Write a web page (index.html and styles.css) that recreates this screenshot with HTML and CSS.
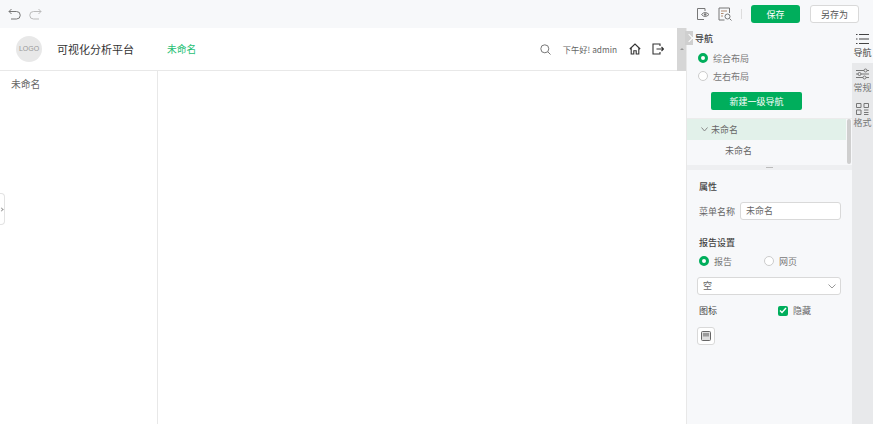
FILE: index.html
```html
<!DOCTYPE html>
<html lang="zh-CN">
<head>
<meta charset="utf-8">
<title>可视化分析平台</title>
<link rel="stylesheet" href="styles.css">
</head>
<body>
<div class="toolbar">
  <div class="tool-left">
    <svg class="ic" width="13" height="13" viewBox="0 0 13 13"><path d="M3.5 1 1 3.5 3.5 6M1 3.5h7.5a3.4 3.4 0 0 1 0 7.5H3" fill="none" stroke="#777" stroke-width="1"/></svg>
    <svg class="ic" width="13" height="13" viewBox="0 0 13 13"><path d="M9.5 1 12 3.500 9.500 6M12 3.500H4.500a3.400 3.400 0 0 0 0 7.500H10" fill="none" stroke="#bbb" stroke-width="1"/></svg>
  </div>
  <div class="tool-right">
    <svg class="ic" width="14" height="14" viewBox="0 0 14 14"><path d="M9 1.500H1.500v11H8M9 1.500v2.500" fill="none" stroke="#777"/><path d="M5.500 7.500Q9 3.500 13 7.500 9 11.500 5.500 7.500Z" fill="none" stroke="#777"/><circle cx="9.200" cy="7.500" r="1.300" fill="#777"/></svg>
    <svg class="ic ic-2" width="14" height="14" viewBox="0 0 14 14"><path d="M11.500 6V1H1v12h5.500" fill="none" stroke="#777"/><path d="M3 4h6M3 6.500h2.500M3 9h2" stroke="#b08a70"/><circle cx="9.500" cy="9.500" r="2.500" fill="none" stroke="#777"/><path d="m11.500 11.500 2 2" stroke="#777"/></svg>
    <span class="tool-sep"></span>
    <button class="btn-save">保存</button>
    <button class="btn-saveas">另存为</button>
  </div>
</div>
<div class="workspace">
  <main class="preview">
    <header class="app-header">
      <div class="logo">LOGO</div>
      <div class="app-title">可视化分析平台</div>
      <div class="app-tab">未命名</div>
      <div class="header-right">
        <svg class="search" width="11" height="11" viewBox="0 0 11 11"><circle cx="4.800" cy="4.800" r="4" fill="none" stroke="#777"/><path d="m7.800 7.800 2.700 2.700" stroke="#777"/></svg>
        <span class="greeting">下午好! admin</span>
        <svg class="home" width="12" height="12" viewBox="0 0 12 12"><path d="M.8 6 6 1l5.200 5M2.200 5v6h2.600V7.800h2.400V11h2.600V5" fill="none" stroke="#333" stroke-width="1.100"/></svg>
        <svg class="logout" width="12" height="12" viewBox="0 0 12 12"><path d="M8 3V1H1v10h7V9" fill="none" stroke="#333" stroke-width="1.100"/><path d="M4.500 6H11.500M9.500 4l2 2-2 2" fill="none" stroke="#333" stroke-width="1.100"/></svg>
      </div>
      <div class="scroll-col"><span class="scroll-arrow"></span></div>
    </header>
    <div class="preview-body">
      <aside class="side-menu">未命名</aside>
      <div class="canvas"></div>
    </div>
    <div class="side-handle"><span class="side-chevron"></span></div>
  </main>
  <section class="panel">
    <div class="panel-collapse"></div>
    <div class="panel-top">
      <h3 class="panel-title">导航</h3>
      <label class="radio-row"><span class="radio on"></span>综合布局</label>
      <label class="radio-row"><span class="radio"></span>左右布局</label>
      <button class="btn-new">新建一级导航</button>
    </div>
    <div class="tree">
      <div class="tree-row active">
        <svg width="7" height="5" viewBox="0 0 7 5"><path d="M.5.500 3.500 4 6.500.500" fill="none" stroke="#888"/></svg>未命名
      </div>
      <div class="tree-row child">未命名</div>
      <div class="tree-thumb"></div>
    </div>
    <div class="splitter"><span></span></div>
    <div class="props">
      <h4 class="sec-title">属性</h4>
      <div class="field">
        <span>菜单名称</span>
        <div class="input">未命名</div>
      </div>
      <h4 class="sec-title report">报告设置</h4>
      <div class="radio-pair">
        <label class="radio-row"><span class="radio on"></span>报告</label>
        <label class="radio-row"><span class="radio"></span>网页</label>
      </div>
      <div class="select">空
        <svg width="8" height="5" viewBox="0 0 8 5"><path d="M.5.500 4 4 7.500.500" fill="none" stroke="#999"/></svg>
      </div>
      <div class="icon-row">
        <span class="icon-label">图标</span>
        <label class="check"><span class="checkbox"><svg width="8" height="7" viewBox="0 0 8 7"><path d="M1 3.500 3 5.500 7 1" fill="none" stroke="#fff" stroke-width="1.400"/></svg></span>隐藏</label>
      </div>
      <div class="icon-btn"><svg width="10" height="10" viewBox="0 0 10 10"><rect x=".5" y=".5" width="9" height="9" rx="1" fill="#ddd" stroke="#666"/><rect x="2" y="2" width="6" height="3.500" fill="#999"/></svg></div>
    </div>
  </section>
  <nav class="tabs">
    <div class="tab on">
      <svg width="13" height="12" viewBox="0 0 13 12"><path d="M3 1.500h10M3 6h10M3 10.500h10M0 1.500h1.500M0 6h1.500M0 10.500h1.500" stroke="#444" fill="none"/></svg>
      <span>导航</span>
    </div>
    <div class="tab">
      <svg width="13" height="12" viewBox="0 0 13 12"><path d="M0 2.500h8M11 2.500h2M0 6h2M5 6h8M0 9.500h7M10 9.500h3" stroke="#777"/><circle cx="9.500" cy="2.500" r="1.500" fill="none" stroke="#777"/><circle cx="3.500" cy="6" r="1.500" fill="none" stroke="#777"/><circle cx="8.500" cy="9.500" r="1.500" fill="none" stroke="#777"/></svg>
      <span>常规</span>
    </div>
    <div class="tab">
      <svg width="13" height="12" viewBox="0 0 13 12"><path d="M.5.500h4.500v4h-4.500zM8 .5h4.500v4H8zM.5 7h4.500v4.500h-4.500zM8 7h4.500M8 9.500h4.500M8 11.500h4.500" fill="none" stroke="#777"/></svg>
      <span>格式</span>
    </div>
  </nav>
</div>
</body>
</html>
```
FILE: styles.css
```css
* { box-sizing: border-box; }
html, body { margin: 0; height: 100%; }
body {
  width: 873px;
  height: 424px;
  overflow: hidden;
  background: #fff;
  color: #555;
  font: 9px "Noto Sans CJK SC", "Liberation Sans", sans-serif;
  display: flex;
  flex-direction: column;
}
svg { display: block; flex: none; }
button { font-family: inherit; padding: 0; cursor: pointer; }
h3, h4 { margin: 0; font-weight: 500; }

.toolbar {
  height: 28px;
  flex: none;
  background: #f7f8fa;
  display: flex;
  align-items: center;
  justify-content: space-between;
  padding: 0 14px 0 8px;
}
.tool-left { display: flex; gap: 8px; }
.tool-right { display: flex; align-items: center; }
.ic-2 { margin-left: 8px; }
.tool-sep { width: 1px; height: 10px; background: #ddd; margin: 0 9px; }
.btn-save {
  width: 49px; height: 18px;
  border: 0; border-radius: 3px;
  background: #00ae5c; color: #fff;
  font-size: 9px;
}
.btn-saveas {
  width: 49px; height: 18px;
  margin-left: 10px;
  border: 1px solid #d9d9d9; border-radius: 3px;
  background: #fff; color: #555;
  font-size: 9px;
}

.workspace { flex: 1; display: flex; min-height: 0; }
.preview {
  position: relative;
  width: 687px;
  flex: none;
  display: flex;
  flex-direction: column;
  border-right: 1px solid #e8e8e8;
}
.app-header {
  height: 43px;
  flex: none;
  display: flex;
  align-items: center;
  border-bottom: 1px solid #e8e8e8;
  padding-left: 16px;
}
.logo {
  width: 26px; height: 26px;
  border-radius: 50%;
  background: #e8e8e8;
  color: #999;
  font: 7px/26px "Liberation Sans", sans-serif;
  text-align: center;
}
.app-title { margin-left: 15px; font-size: 11px; color: #333; width: 110px; }
.app-tab { color: #1fbf75; font-size: 9.800px; }
.header-right { margin-left: auto; display: flex; align-items: center; }
.greeting { margin-left: 12px; font-size: 8.300px; color: #666; }
.home { margin-left: 12px; }
.logout { margin-left: 11px; }
.scroll-col {
  width: 9px;
  height: 43px;
  margin-left: 13px;
  background: #d6d6d6;
  display: flex;
  align-items: center;
  justify-content: center;
}
.scroll-arrow {
  width: 0; height: 0;
  border: 2px solid transparent;
  border-bottom: 2px solid #999;
  border-top: 0;
}
.preview-body { flex: 1; display: flex; min-height: 0; }
.side-menu {
  width: 158px;
  flex: none;
  border-right: 1px solid #e8e8e8;
  padding: 6px 11px;
  font-size: 9.800px;
  color: #666;
}
.canvas { flex: 1; }
.side-handle {
  position: absolute;
  left: 0; top: 165px;
  width: 5px; height: 32px;
  background: #fff;
  border: 1px solid #e3e3e3;
  border-left: 0;
  border-radius: 0 4px 4px 0;
  display: flex;
  align-items: center;
}
.side-chevron {
  width: 3px; height: 3px;
  border-top: 1px solid #999;
  border-right: 1px solid #999;
  transform: rotate(45deg);
}

.panel {
  position: relative;
  width: 165px;
  flex: none;
  background: #f7f8fa;
  display: flex;
  flex-direction: column;
}
.panel-collapse {
  position: absolute;
  left: -2px; top: 3px;
  width: 8px; height: 14px;
  background: #cfcfcf;
}
.panel-collapse::after {
  content: "";
  position: absolute;
  left: 1px; top: 4px;
  width: 5px; height: 5px;
  border-top: 1px solid #fff;
  border-right: 1px solid #fff;
  transform: rotate(45deg);
}
.panel-top { height: 90px; flex: none; padding: 4px 0 0 8px; }
.panel-title { font-size: 9px; color: #444; line-height: 13px; }
.radio-row {
  display: flex;
  align-items: center;
  gap: 5px;
  height: 18px;
  font-size: 9px;
  color: #777;
}
.panel-top .radio-row { margin-left: 3px; }
.panel-top .panel-title + .radio-row { margin-top: 4px; }
.radio {
  width: 10px; height: 10px;
  border-radius: 50%;
  border: 1px solid #ccc;
  background: #fff;
  flex: none;
}
.radio.on { border: 3px solid #00ae5c; }
.btn-new {
  display: block;
  width: 91px; height: 18px;
  margin: 7px 0 0 16px;
  border: 0; border-radius: 2px;
  background: #00ae5c; color: #fff;
  font-size: 9px;
}
.tree {
  position: relative;
  height: 47px;
  flex: none;
  border-top: 1px solid #ececec;
}
.tree-row {
  height: 21px;
  display: flex;
  align-items: center;
  font-size: 9px;
  color: #666;
}
.tree-row.active { background: #e2f1ea; padding-left: 14px; gap: 3px; width: 159px; }
.tree-row.child { padding-left: 38px; }
.tree-thumb {
  position: absolute;
  right: 1px; top: 0;
  width: 4px; height: 45px;
  border-radius: 2px;
  background: #cfcfcf;
}
.splitter {
  height: 5px;
  flex: none;
  background: #eeeff1;
  display: flex;
  justify-content: center;
  align-items: center;
}
.splitter span { width: 7px; height: 1px; background: #bbb; }
.props { flex: 1; padding: 10px 11px 0 12px; font-size: 9px; color: #666; }
.sec-title { font-size: 9px; color: #444; line-height: 13px; }
.field { display: flex; align-items: center; gap: 5px; margin-top: 9px; }
.input, .select {
  background: #fff;
  border: 1px solid #d9d9d9;
  border-radius: 3px;
  height: 18px;
  line-height: 16px;
  padding-left: 5px;
  color: #666;
}
.input { flex: 1; }
.report { margin-top: 16px; }
.radio-pair { display: flex; margin-top: 3px; }
.radio-pair .radio-row { width: 65px; }
.select {
  margin: 7px 0 0 -2px;
  display: flex;
  align-items: center;
  justify-content: space-between;
  padding-right: 4px;
}
.icon-row { display: flex; align-items: center; margin-top: 9px; }
.icon-label { width: 79px; color: #444; }
.check { display: flex; align-items: center; gap: 5px; }
.checkbox {
  width: 10px; height: 10px;
  border-radius: 2px;
  background: #00ae5c;
  display: flex;
  align-items: center;
  justify-content: center;
}
.icon-btn {
  width: 18px; height: 18px;
  margin: 10px 0 0 -2px;
  background: #fff;
  border: 1px solid #d9d9d9;
  border-radius: 3px;
  display: flex;
  align-items: center;
  justify-content: center;
}

.tabs { flex: 1; background: #e8e9eb; }
.tab {
  height: 35px;
  display: flex;
  flex-direction: column;
  align-items: center;
  justify-content: center;
  gap: 2px;
  font-size: 9px;
  color: #777;
  line-height: 12px;
}
.tab.on { background: #f7f8fa; color: #444; }
```
